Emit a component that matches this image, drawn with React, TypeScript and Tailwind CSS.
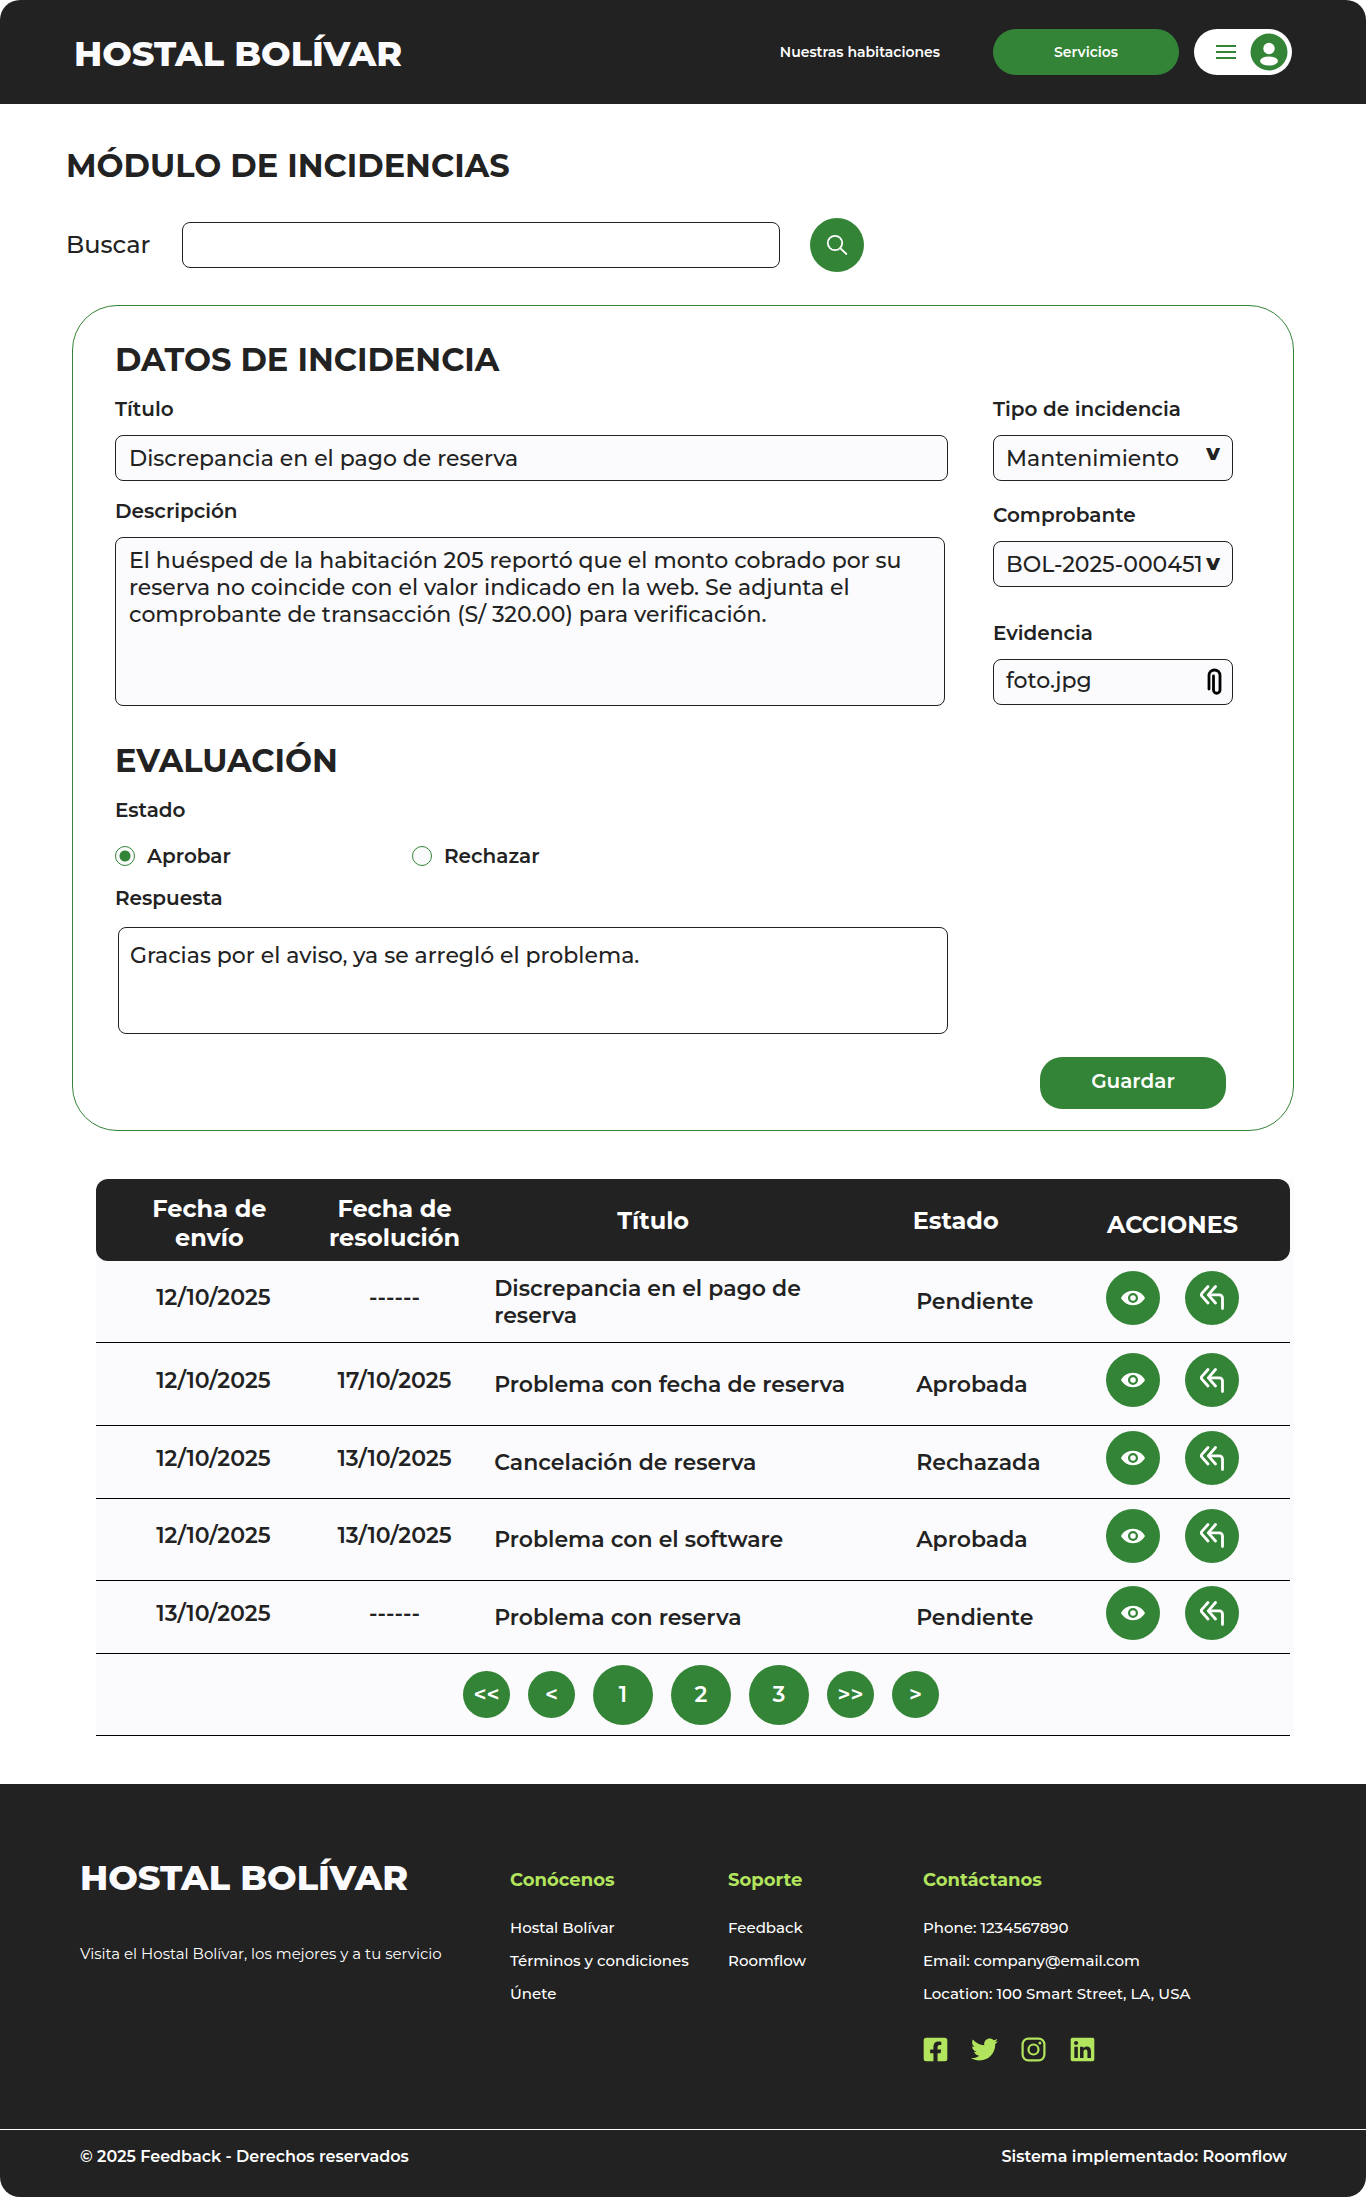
import { useState } from "react";
import { FaFacebookSquare, FaLinkedin, FaTwitter } from "react-icons/fa";

const rows = [
  { sent: "12/10/2025", solved: "------", title: "Discrepancia en el pago de reserva", state: "Pendiente", height: "h-[82px]" },
  { sent: "12/10/2025", solved: "17/10/2025", title: "Problema con fecha de reserva", state: "Aprobada", height: "h-[83px]" },
  { sent: "12/10/2025", solved: "13/10/2025", title: "Cancelación de reserva", state: "Rechazada", height: "h-[73px]" },
  { sent: "12/10/2025", solved: "13/10/2025", title: "Problema con el software", state: "Aprobada", height: "h-[82px]" },
  { sent: "13/10/2025", solved: "------", title: "Problema con reserva", state: "Pendiente", height: "h-[73px]" },
];

const pages = [
  { label: "<<", name: "Primera página", size: "size-[47px]" },
  { label: "<", name: "Página anterior", size: "size-[47px]" },
  { label: "1", name: "Página 1", size: "size-[60px]" },
  { label: "2", name: "Página 2", size: "size-[60px]" },
  { label: "3", name: "Página 3", size: "size-[60px]" },
  { label: ">>", name: "Última página", size: "size-[47px]" },
  { label: ">", name: "Página siguiente", size: "size-[47px]" },
];

const field = "w-full rounded-lg border border-[#222222] bg-[#fbfbfd] px-3 text-[22px] leading-[27px] font-medium text-[#222222]";
const label = "block text-[20px] leading-6 font-semibold";
const round = "flex size-[54px] items-center justify-center rounded-full bg-[#338436] text-white";

function SearchIcon() {
  return (
    <svg viewBox="0 0 22 22" className="size-[22px]" fill="none" stroke="currentColor" strokeWidth="1.8" strokeLinecap="round" aria-hidden="true">
      <circle cx="9" cy="9" r="7.2" />
      <path d="M14.2 14.2 20.400 20" />
    </svg>
  );
}

function EyeIcon() {
  return (
    <svg viewBox="0 0 24 16" className="h-4 w-6" aria-hidden="true">
      <path fill="currentColor" fillRule="evenodd" d="M12 .8C6.7.8 2.2 3.9 0 8c2.2 4.1 6.7 7.2 12 7.2S21.8 12.1 24 8C21.8 3.9 17.3.8 12 .8ZM12 3a5 5 0 1 1 0 10 5 5 0 0 1 0-10Zm0 2.200a2.8 2.8 0 1 0 0 5.600 2.8 2.8 0 0 0 0-5.600Z" />
    </svg>
  );
}

function ReplyAllIcon() {
  return (
    <svg viewBox="0 0 24 25" className="h-[25px] w-6" fill="none" stroke="currentColor" strokeWidth="2.8" strokeLinecap="round" strokeLinejoin="round" aria-hidden="true">
      <path d="M8 1.500 1.900 8.400a2 2 0 0 0 0 2.700L8 18" />
      <path d="M15.500 1.500 8.300 9.800l7.200 8.200" />
      <path d="M9 9.800h10.300a3.200 3.200 0 0 1 3.200 3.200v10.500" />
    </svg>
  );
}

function ClipIcon() {
  return (
    <svg viewBox="0 0 16 28" className="h-7 w-4" fill="none" stroke="black" strokeWidth="2.8" strokeLinecap="round" aria-hidden="true">
      <path d="M2 21V7.500a5.500 5.500 0 0 1 11 0v14.500a3.250 3.250 0 0 1-6.500 0V8" />
    </svg>
  );
}

function InstagramIcon() {
  return (
    <svg viewBox="0 0 27 27" className="size-[27px]" fill="none" stroke="currentColor" strokeWidth="2.2" aria-hidden="true">
      <rect x="2.6" y="2.6" width="21.800" height="21.800" rx="5.800" />
      <circle cx="13.500" cy="13.500" r="5" />
      <circle cx="19.900" cy="7.100" r="1.500" fill="currentColor" stroke="none" />
    </svg>
  );
}

function Header() {
  return (
    <header className="flex h-[104px] items-center justify-between rounded-t-[20px] bg-[#222222] pr-[74px] pl-[74px]">
      <h1 className="pt-1 text-[35px] font-extrabold text-[#fbfbfd]">HOSTAL BOLÍVAR</h1>
      <nav className="flex items-center text-white">
        <a href="#habitaciones" className="mr-[53px] text-[14px] font-semibold">Nuestras habitaciones</a>
        <a href="#servicios" className="mr-[15px] flex h-[46px] w-[186px] items-center justify-center rounded-[23px] bg-[#338436] text-[14px] font-semibold">Servicios</a>
        <button type="button" aria-label="Menú de usuario" className="flex h-[46px] w-[98px] items-center justify-between rounded-full bg-white pr-1 pl-[22px] text-[#338436]">
          <svg viewBox="0 0 20 16" className="h-4 w-5" stroke="currentColor" strokeWidth="2" aria-hidden="true">
            <path d="M0 2h20M0 8h20M0 14h20" />
          </svg>
          <svg viewBox="0 0 38 38" className="size-[38px]" aria-hidden="true">
            <circle cx="19" cy="19" r="18.500" fill="currentColor" />
            <circle cx="19" cy="15.500" r="5.700" fill="white" />
            <ellipse cx="19" cy="28" rx="9" ry="4.600" fill="white" />
          </svg>
        </button>
      </nav>
    </header>
  );
}

function IncidentForm() {
  const [status, setStatus] = useState("aprobar");
  const radio = "size-5 appearance-none rounded-full border border-[#338436] bg-[#fbfbfd] checked:bg-[radial-gradient(circle,#338436_5px,#fbfbfd_6px)]";
  return (
    <form className="mx-[72px] mt-[33px] rounded-[45px] border border-[#338436] px-[42px] pt-[34px] pb-[21px]" onSubmit={(e) => e.preventDefault()}>
      <h2 className="text-[32px] leading-10 font-bold">DATOS DE INCIDENCIA</h2>
      <div className="mt-[17px] grid grid-cols-[1fr_240px] gap-x-[45px] pr-[18px]">
        <div>
          <label htmlFor="titulo" className={label}>Título</label>
          <input id="titulo" className={`${field} mt-[14px] h-[46px] pl-[13px]`} defaultValue="Discrepancia en el pago de reserva" />
          <label htmlFor="descripcion" className={`${label} mt-[18px]`}>Descripción</label>
          <div className="mt-[14px] pr-[3px]">
            <textarea id="descripcion" className={`${field} block h-[169px] resize-none py-[9px] pl-[13px]`} defaultValue="El huésped de la habitación 205 reportó que el monto cobrado por su reserva no coincide con el valor indicado en la web. Se adjunta el comprobante de transacción (S/ 320.00) para verificación." />
          </div>
        </div>
        <div>
          <label htmlFor="tipo" className={label}>Tipo de incidencia</label>
          <div className="relative mt-[14px]">
            <select id="tipo" className={`${field} block h-[46px] appearance-none`}>
              <option>Mantenimiento</option>
            </select>
            <span className="pointer-events-none absolute top-1 right-[13px] text-[22px] leading-7 font-extrabold">v</span>
          </div>
          <label htmlFor="comprobante" className={`${label} mt-[22px]`}>Comprobante</label>
          <div className="relative mt-[14px]">
            <select id="comprobante" className={`${field} block h-[46px] appearance-none`}>
              <option>BOL-2025-000451</option>
            </select>
            <span className="pointer-events-none absolute top-2 right-[13px] text-[22px] leading-7 font-extrabold">v</span>
          </div>
          <label htmlFor="evidencia" className={`${label} mt-[34px]`}>Evidencia</label>
          <div className="relative mt-[14px]">
            <input id="evidencia" className={`${field} block h-[46px] pb-1`} defaultValue="foto.jpg" />
            <span className="pointer-events-none absolute top-[9px] right-[10px]"><ClipIcon /></span>
          </div>
        </div>
      </div>

      <h2 className="mt-[35px] text-[32px] leading-10 font-bold">EVALUACIÓN</h2>
      <fieldset className="mt-[17px]">
        <legend className={label}>Estado</legend>
        <div className="mt-[22px] flex text-[20px] leading-6 font-semibold">
          <label className="flex w-[297px] items-center gap-3">
            <input type="radio" name="estado" className={radio} checked={status === "aprobar"} onChange={() => setStatus("aprobar")} />
            Aprobar
          </label>
          <label className="flex items-center gap-3">
            <input type="radio" name="estado" className={radio} checked={status === "rechazar"} onChange={() => setStatus("rechazar")} />
            Rechazar
          </label>
        </div>
      </fieldset>
      <label htmlFor="respuesta" className={`${label} mt-[18px]`}>Respuesta</label>
      <div className="pr-[303px] pl-[3px]">
        <textarea id="respuesta" className="mt-[17px] block h-[107px] w-full resize-none rounded-lg border border-[#222222] px-[11px] py-[14px] text-[22px] leading-[27px] font-medium" defaultValue="Gracias por el aviso, ya se arregló el problema." />
      </div>
      <div className="mt-[23px] flex justify-end pr-[25px]">
        <button type="submit" className="h-[52px] w-[186px] rounded-[22px] bg-[#338436] pb-1 text-[20px] font-semibold text-white">Guardar</button>
      </div>
    </form>
  );
}

function IncidentTable() {
  return (
    <section className="mr-[72px] ml-24 mt-12 bg-[#fbfbfd] pr-1">
      <table className="w-full table-fixed border-separate border-spacing-0 text-[22px] leading-[27px] font-semibold">
        <colgroup>
          <col className="w-[19%]" />
          <col className="w-[12%]" />
          <col className="w-[33%]" />
          <col className="w-[17%]" />
          <col className="w-[19%]" />
        </colgroup>
        <thead className="text-[24px] leading-[29px] text-white">
          <tr className="h-[82px] [&>th]:bg-[#222222] [&>th]:font-bold">
            <th scope="col" className="rounded-l-xl px-12 pt-1.5">Fecha de envío</th>
            <th scope="col" className="pt-1.5">Fecha de resolución</th>
            <th scope="col" className="pr-5">Título</th>
            <th scope="col" className="pr-3">Estado</th>
            <th scope="col" className="rounded-r-xl pr-2 pt-2">ACCIONES</th>
          </tr>
        </thead>
        <tbody className="[&_td]:border-b [&_td]:border-black">
          {rows.map((row, i) => (
            <tr key={i} className={row.height}>
              <td className="pb-2 pl-2 text-center">{row.sent}</td>
              <td className="pb-2 text-center">{row.solved}</td>
              <td className="pr-2 pl-7">{row.title}</td>
              <td className="pl-14">{row.state}</td>
              <td className="pb-2">
                <div className="flex justify-center gap-[25px] pr-2">
                  <button type="button" aria-label="Ver" className={round}><EyeIcon /></button>
                  <button type="button" aria-label="Responder" className={round}><ReplyAllIcon /></button>
                </div>
              </td>
            </tr>
          ))}
        </tbody>
      </table>
      <nav aria-label="Paginación" className="flex h-[82px] items-center justify-center gap-[18px] border-b border-black pl-4 text-[22px] font-semibold text-white">
        {pages.map((p) => (
          <button key={p.label} type="button" aria-label={p.name} className={`${p.size} rounded-full bg-[#338436]`}>{p.label}</button>
        ))}
      </nav>
    </section>
  );
}

function Footer() {
  const heading = "text-[18px] leading-6 font-bold text-[#b2e45d]";
  const list = "mt-6 space-y-[9px] text-[15px] leading-6 font-medium";
  return (
    <footer className="mt-12 rounded-b-[20px] bg-[#222222] text-white">
      <div className="grid h-[345px] grid-cols-[430fr_218fr_195fr_443fr] pt-[84px] pl-20">
        <div>
          <p className="-mt-[14px] text-[35px] leading-[48px] font-extrabold text-[#fbfbfd]">HOSTAL BOLÍVAR</p>
          <p className="mt-10 text-[15px] leading-6">Visita el Hostal Bolívar, los mejores y a tu servicio</p>
        </div>
        <div>
          <h3 className={heading}>Conócenos</h3>
          <ul className={list}>
            <li><a href="#hostal">Hostal Bolívar</a></li>
            <li><a href="#terminos">Términos y condiciones</a></li>
            <li><a href="#unete">Únete</a></li>
          </ul>
        </div>
        <div>
          <h3 className={heading}>Soporte</h3>
          <ul className={list}>
            <li><a href="#feedback">Feedback</a></li>
            <li><a href="#roomflow">Roomflow</a></li>
          </ul>
        </div>
        <div>
          <h3 className={heading}>Contáctanos</h3>
          <ul className={list}>
            <li>Phone: 1234567890</li>
            <li>Email: company@email.com</li>
            <li>Location: 100 Smart Street, LA, USA</li>
          </ul>
          <div className="mt-[30px] -ml-px flex items-center gap-[22px] text-[#b2e45d]">
            <a href="#facebook" aria-label="Facebook"><FaFacebookSquare className="size-[27px]" /></a>
            <a href="#twitter" aria-label="Twitter"><FaTwitter className="size-[27px]" /></a>
            <a href="#instagram" aria-label="Instagram"><InstagramIcon /></a>
            <a href="#linkedin" aria-label="LinkedIn"><FaLinkedin className="size-[27px]" /></a>
          </div>
        </div>
      </div>
      <div className="flex h-[68px] justify-between border-t border-white pt-[15px] pr-[79px] pl-20 text-[16px] leading-6 font-semibold">
        <p>© 2025 Feedback - Derechos reservados</p>
        <p>Sistema implementado: Roomflow</p>
      </div>
    </footer>
  );
}

export default function App() {
  return (
    <div className="bg-white font-['Montserrat','Inter',sans-serif] text-[#222222]">
      <Header />
      <main>
        <h2 className="mt-[42px] ml-[66px] text-[32px] leading-10 font-bold">MÓDULO DE INCIDENCIAS</h2>
        <form role="search" className="mt-8 ml-[66px] flex items-center" onSubmit={(e) => e.preventDefault()}>
          <label htmlFor="buscar" className="w-[116px] text-[24px] font-medium">Buscar</label>
          <input id="buscar" type="search" className="mr-[30px] h-[46px] w-[46%] rounded-lg border border-[#222222] px-3 text-[22px] font-medium" />
          <button type="submit" aria-label="Buscar" className={round}><SearchIcon /></button>
        </form>
        <IncidentForm />
        <IncidentTable />
      </main>
      <Footer />
    </div>
  );
}
